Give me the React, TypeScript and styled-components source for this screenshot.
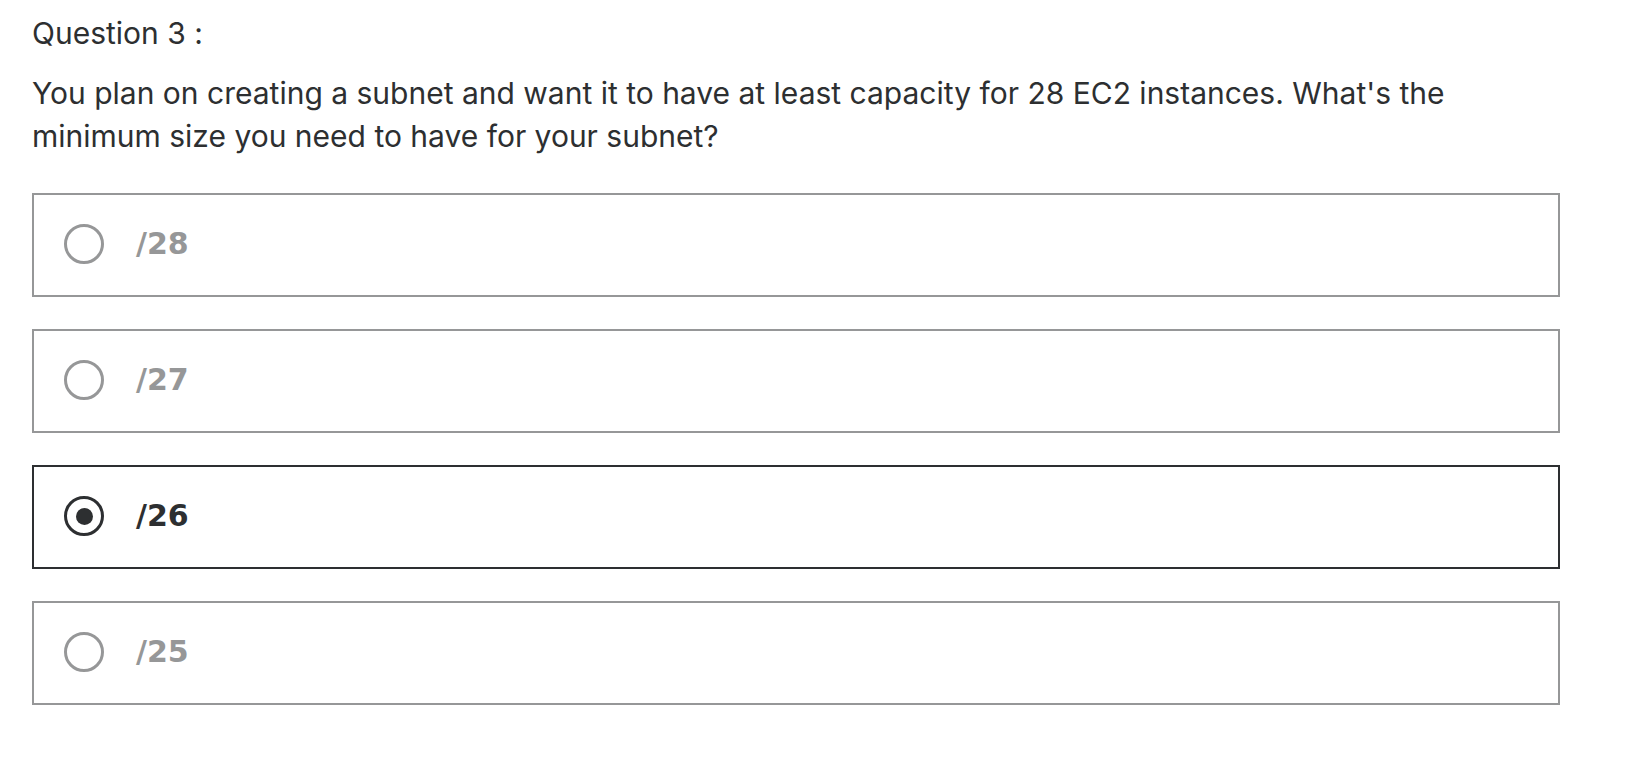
import React, { useState } from "react";
import styled, { createGlobalStyle, css } from "styled-components";

const GlobalStyle = createGlobalStyle`
  html, body {
    margin: 0;
    padding: 0;
    background: #ffffff;
  }
  body {
    font-family: Inter, "Liberation Sans", Arial, sans-serif;
    font-feature-settings: "calt" 0;
    color: #2d2f31;
    -webkit-font-smoothing: antialiased;
  }
`;

const Page = styled.main`
  width: 1528px;
  padding: 12px 0 0 32px;
`;

const QuestionLabel = styled.div`
  font-size: 30px;
  line-height: 42px;
  font-weight: 400;
  color: #2d2f31;
`;

const Prompt = styled.p`
  margin: 18px 0 35px;
  font-size: 30px;
  line-height: 43px;
  font-weight: 400;
  color: #2d2f31;
`;

const OptionList = styled.div`
  display: flex;
  flex-direction: column;
  gap: 32px;
`;

const OptionRow = styled.label<{ $selected: boolean }>`
  box-sizing: border-box;
  height: 104px;
  display: flex;
  align-items: center;
  gap: 32px;
  padding: 0 30px;
  border: 2px solid ${(p) => (p.$selected ? "#2d2f31" : "#969798")};
  color: ${(p) => (p.$selected ? "#2d2f31" : "#969798")};
  cursor: pointer;
`;

const Radio = styled.span<{ $selected: boolean }>`
  box-sizing: border-box;
  width: 40px;
  height: 40px;
  margin-top: -2px;
  border-radius: 50%;
  border: 3.5px solid currentColor;
  display: flex;
  align-items: center;
  justify-content: center;
  flex-shrink: 0;
  ${(p) =>
    p.$selected &&
    css`
      &::after {
        content: "";
        width: 17px;
        height: 17px;
        border-radius: 50%;
        background: currentColor;
      }
    `}
`;

const OptionText = styled.span`
  font-family: "DejaVu Sans", Inter, sans-serif;
  font-size: 30px;
  font-weight: 700;
  line-height: 1;
  margin-top: -3px;
`;

const options = ["/28", "/27", "/26", "/25"];

export default function App() {
  const [selected, setSelected] = useState(2);
  return (
    <>
      <GlobalStyle />
      <Page>
        <QuestionLabel>Question 3 :</QuestionLabel>
        <Prompt>
          You plan on creating a subnet and want it to have at least capacity for 28 EC2 instances. What's the
          minimum size you need to have for your subnet?
        </Prompt>
        <OptionList>
          {options.map((o, i) => (
            <OptionRow key={o} $selected={i === selected} onClick={() => setSelected(i)}>
              <Radio $selected={i === selected} />
              <OptionText>{o}</OptionText>
            </OptionRow>
          ))}
        </OptionList>
      </Page>
    </>
  );
}
